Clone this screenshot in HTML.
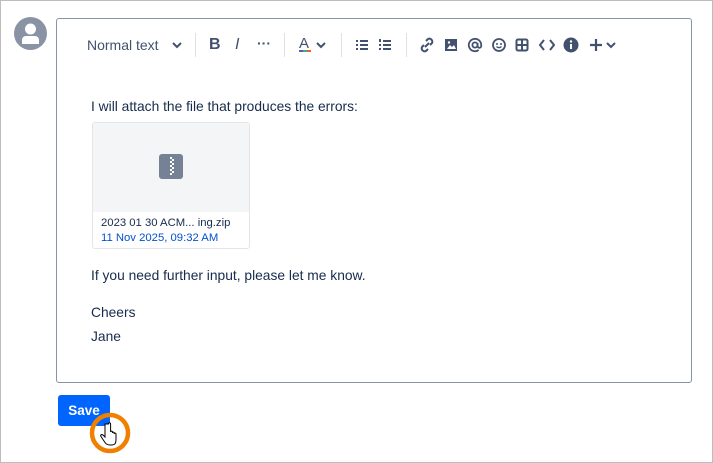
<!DOCTYPE html>
<html><head><style>
body{margin:0;width:713px;height:463px;overflow:hidden;background:#fff;font-family:"Liberation Sans",sans-serif;}
.frame{position:absolute;left:0;top:0;width:711px;height:461px;border:1px solid #bdbdbd;}
.ed{position:absolute;left:56px;top:18px;width:634px;height:363px;border:1px solid #8993a4;border-radius:3px;}
.t{position:absolute;color:#172b4d;font-size:13.8px;}
.ic{position:absolute;}
.sep{position:absolute;top:33px;width:1px;height:24px;background:#dfe1e6;}
</style></head><body>
<div class="frame"></div>
<svg class="ic" style="left:14px;top:17px" width="33" height="33" viewBox="0 0 33 33"><circle cx="16.5" cy="16.5" r="16.5" fill="#8993a4"/><circle cx="16.5" cy="12" r="5.5" fill="#fff"/><path d="M8 27v-4a4 4 0 0 1 4-4h9a4 4 0 0 1 4 4v4z" fill="#fff"/></svg>
<div class="ed"></div>
<div class="t" style="left:87px;top:37px;color:#42526e;font-size:14px">Normal text</div>
<svg class="ic" style="left:172px;top:41px" width="10" height="8"><path d="M1 2l4 4 4-4" stroke="#42526e" stroke-width="2" fill="none"/></svg>
<div class="sep" style="left:195px"></div>
<div class="t" style="left:209px;top:36px;font-weight:bold;font-size:16px;color:#42526e">B</div>
<div class="t" style="left:235px;top:36px;font-style:italic;font-size:16px;color:#42526e">I</div>
<div class="t" style="left:257px;top:35px;font-size:14px;color:#42526e;font-weight:bold">···</div>
<div class="sep" style="left:284px"></div>
<div class="t" style="left:299px;top:35px;font-size:15px;color:#42526e">A</div>
<div class="ic" style="left:299px;top:50px;width:12px;height:2px;background:linear-gradient(90deg,#6554c0 33%,#36b37e 33% 66%,#ff5630 66%)"></div>
<svg class="ic" style="left:316px;top:41px" width="10" height="8"><path d="M1 2l4 4 4-4" stroke="#42526e" stroke-width="2" fill="none"/></svg>
<div class="sep" style="left:341px"></div>
<svg class="ic" style="left:355px;top:38px" width="14" height="14"><g fill="#42526e"><rect x="1" y="2" width="2" height="2"/><rect x="1" y="6" width="2" height="2"/><rect x="1" y="10" width="2" height="2"/><rect x="5" y="2" width="8" height="2"/><rect x="5" y="6" width="8" height="2"/><rect x="5" y="10" width="8" height="2"/></g></svg>
<svg class="ic" style="left:378px;top:38px" width="14" height="14"><g fill="#42526e"><rect x="1" y="1" width="2" height="3"/><rect x="1" y="6" width="2" height="2"/><rect x="1" y="10" width="2" height="2"/><rect x="5" y="2" width="8" height="2"/><rect x="5" y="6" width="8" height="2"/><rect x="5" y="10" width="8" height="2"/></g></svg>
<div class="sep" style="left:406px"></div>
<svg class="ic" style="left:419px;top:37px" width="16" height="16"><g stroke="#42526e" stroke-width="2" fill="none"><path d="M7 4l2-2a3 3 0 0 1 4 4l-2 2"/><path d="M9 12l-2 2a3 3 0 0 1-4-4l2-2"/><path d="M6 10l4-4"/></g></svg>
<svg class="ic" style="left:444px;top:38px" width="14" height="14"><rect x="1" y="1" width="12" height="12" fill="#42526e"/><path d="M3 11l3-4 2 2 2-2 2 4z" fill="#fff"/><circle cx="5" cy="4.5" r="1.2" fill="#fff"/></svg>
<svg class="ic" style="left:467px;top:37px" width="16" height="16"><circle cx="8" cy="8" r="2.6" stroke="#42526e" stroke-width="1.8" fill="none"/><path d="M10.6 6v3a1.8 1.8 0 0 0 3.6 0V8a6.2 6.2 0 1 0-2.5 5" stroke="#42526e" stroke-width="1.8" fill="none"/></svg>
<svg class="ic" style="left:491px;top:37px" width="16" height="16"><circle cx="8" cy="8" r="6" stroke="#42526e" stroke-width="1.8" fill="none"/><circle cx="6" cy="7" r="1" fill="#42526e"/><circle cx="10" cy="7" r="1" fill="#42526e"/><path d="M5.5 9.5a3 2.5 0 0 0 5 0" stroke="#42526e" stroke-width="1.4" fill="none"/></svg>
<svg class="ic" style="left:515px;top:38px" width="14" height="14"><rect x="1.5" y="1.5" width="11" height="11" rx="1.5" stroke="#42526e" stroke-width="2" fill="none"/><path d="M7 1v12M1 7h12" stroke="#42526e" stroke-width="2"/></svg>
<svg class="ic" style="left:539px;top:38px" width="16" height="14"><path d="M5 2L1 7l4 5M11 2l4 5-4 5" stroke="#42526e" stroke-width="2" fill="none"/></svg>
<svg class="ic" style="left:563px;top:37px" width="16" height="16"><circle cx="8" cy="8" r="7.5" fill="#42526e"/><rect x="7" y="7" width="2" height="5" fill="#fff"/><circle cx="8" cy="4.5" r="1.2" fill="#fff"/></svg>
<svg class="ic" style="left:588px;top:37px" width="16" height="16"><path d="M8 2v12M2 8h12" stroke="#42526e" stroke-width="2.2"/></svg>
<svg class="ic" style="left:606px;top:41px" width="10" height="8"><path d="M1 2l4 4 4-4" stroke="#42526e" stroke-width="2" fill="none"/></svg>
<div class="t" style="left:91px;top:99px">I will attach the file that produces the errors:</div>
<div class="ic" style="left:92px;top:122px;width:156px;height:125px;border:1px solid #e4e5e8;border-radius:3px;background:#fff;overflow:hidden">
<div style="height:89px;background:#f4f5f7"></div>
<div class="t" style="left:8px;top:94px;font-size:11.3px">2023 01 30 ACM... ing.zip</div>
<div class="t" style="left:8px;top:109px;font-size:11.3px;color:#0052cc">11 Nov 2025, 09:32 AM</div>
</div>
<svg class="ic" style="left:159px;top:154px" width="24" height="25"><rect width="24" height="25" rx="3" fill="#758195"/><g fill="#fff"><rect x="11" y="3" width="2" height="2"/><rect x="13" y="5" width="2" height="2"/><rect x="11" y="7" width="2" height="2"/><rect x="13" y="9" width="2" height="2"/><rect x="11" y="11" width="2" height="2"/><rect x="13" y="13" width="2" height="2"/><rect x="11" y="15" width="2" height="2"/><rect x="13" y="17" width="2" height="2"/><rect x="11" y="19" width="2" height="2"/></g></svg>
<div class="t" style="left:91px;top:268px">If you need further input, please let me know.</div>
<div class="t" style="left:91px;top:305px">Cheers</div>
<div class="t" style="left:91px;top:329px">Jane</div>
<div class="ic" style="left:58px;top:395px;width:52px;height:31px;background:#0065ff;border-radius:3px;color:#fff;font-weight:bold;font-size:13.5px;line-height:31px;text-align:center">Save</div>
<svg class="ic" style="left:88px;top:411px" width="46" height="44"><circle cx="22" cy="22" r="18" stroke="#f08000" stroke-width="4.5" fill="none"/><path d="M17 13v13l-2-2c-1.5-1-3 0-2 1.5l4 6c1 1.5 2 2.5 5 2.5h2c3 0 4-2 4-5v-6c0-1.2-1.8-1.2-1.8 0v-1c0-1.2-1.8-1.2-1.8 0v-1c0-1.2-1.8-1.2-1.8 0V13c0-1.5-2.2-1.5-2.2 0z" fill="#fff" stroke="#000" stroke-width="1"/></svg>
</body></html>
